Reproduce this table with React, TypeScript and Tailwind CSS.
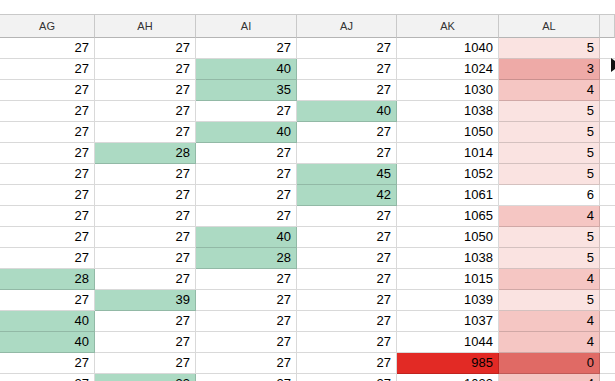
import React from 'react'

type Tone = 'g' | 'l' | 'm' | 'd' | 'z' | 'r' | ''

interface Cell {
  v: string
  t?: Tone
}

const cols = ['AG', 'AH', 'AI', 'AJ', 'AK', 'AL', '']

const toneClass: Record<string, string> = {
  g: 'bg-[#acdac3]',
  l: 'bg-[#fae3e1]',
  m: 'bg-[#f5c6c3]',
  d: 'bg-[#eeaaa7]',
  z: 'bg-[#e06a65]',
  r: 'bg-[#e22a25]',
  '': 'bg-white',
}

// each row: AG AH AI AJ AK AL (with tone suffix after ":")
const raw = [
  '27 27 27 27 1040 5:l',
  '27 27 40:g 27 1024 3:d',
  '27 27 35:g 27 1030 4:m',
  '27 27 27 40:g 1038 5:l',
  '27 27 40:g 27 1050 5:l',
  '27 28:g 27 27 1014 5:l',
  '27 27 27 45:g 1052 5:l',
  '27 27 27 42:g 1061 6',
  '27 27 27 27 1065 4:m',
  '27 27 40:g 27 1050 5:l',
  '27 27 28:g 27 1038 5:l',
  '28:g 27 27 27 1015 4:m',
  '27 39:g 27 27 1039 5:l',
  '40:g 27 27 27 1037 4:m',
  '40:g 27 27 27 1044 4:m',
  '27 27 27 27 985:r 0:z',
  '27 33:g 27 27 1033 4:m',
]

const rows: Cell[][] = raw.map((line) =>
  line.split(' ').map((s) => {
    const [v, t] = s.split(':')
    return { v, t: (t || '') as Tone }
  })
)

const grid = 'grid grid-cols-[95px_101px_101px_100px_102px_101px_1fr]'

export default function App() {
  return (
    <div className="relative w-[615px] h-[381px] overflow-hidden bg-white font-['Liberation_Sans',Arial,sans-serif]">
      <div className="h-[14px]" />
      <div className={`${grid} h-[24px] bg-[#f2f2f2] border-t border-[#c9c9c9] border-b-[#b5b5b5]`}>
        {cols.map((c, i) => (
          <div
            key={i}
            className="flex items-center justify-center border-r border-b border-r-[#c9c9c9] border-b-[#b5b5b5] text-[11px] text-[#333]"
          >
            {c}
          </div>
        ))}
      </div>
      {rows.map((row, r) => (
        <div key={r} className={grid}>
          {row.map((cell, i) => (
            <div
              key={i}
              className={`h-[21px] flex items-center justify-end pr-[5px] border-r border-b border-black/15 text-[13px] text-black ${toneClass[cell.t || '']}`}
            >
              {cell.v}
            </div>
          ))}
          <div className="h-[21px] border-b border-black/15" />
        </div>
      ))}
      {/* mouse pointer peeking in at the edge */}
      <svg className="absolute left-[611px] top-[58px]" width="10" height="14" viewBox="0 0 10 14">
        <polygon points="0,0 9,7 0,14" fill="#111" />
      </svg>
    </div>
  )
}
